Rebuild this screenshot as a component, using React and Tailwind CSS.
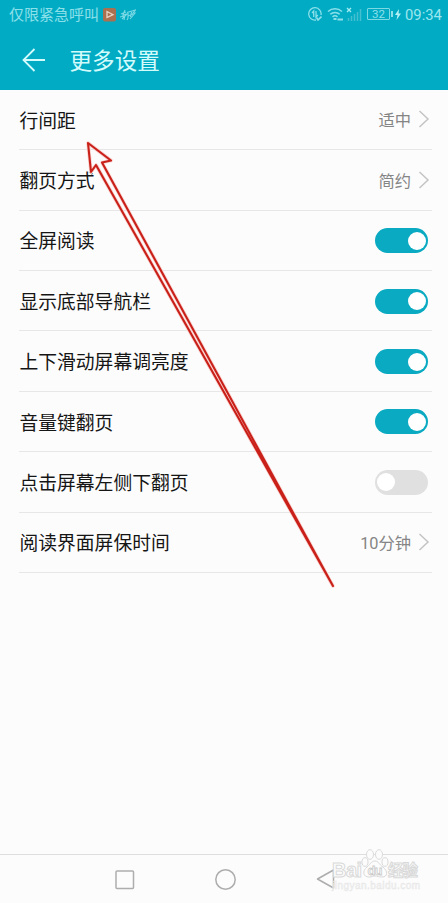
const rows = [
  { label: '行间距', value: '适中' },
  { label: '翻页方式', value: '简约' },
  { label: '全屏阅读', on: true },
  { label: '显示底部导航栏', on: true },
  { label: '上下滑动屏幕调亮度', on: true },
  { label: '音量键翻页', on: true },
  { label: '点击屏幕左侧下翻页', on: false },
  { label: '阅读界面屏保时间', value: '10分钟' },
];

function Toggle({ on }) {
  return (
    <span
      role="switch"
      aria-checked={on}
      className={`mr-[4px] mt-[1px] flex h-[25px] w-[53px] items-center rounded-full px-[2px] ${on ? 'justify-end bg-[#0aaac2]' : 'justify-start bg-[#e0e0e0]'}`}
    >
      <span className="size-[18px] rounded-full bg-white" />
    </span>
  );
}

function Row({ label, value, on }) {
  return (
    <li className="flex h-[60.4px] items-center justify-between border-b border-[#e7e7e7] text-[18.8px] leading-none text-[#151515]">
      <span className="whitespace-nowrap pl-[0.5px] pt-[5px]">{label}</span>
      {value ? (
        <span className="mr-[2px] flex items-center gap-[7px] text-[16.3px] text-[#858585]">
          <span className="pt-[4px]">{value}</span>
          <svg className="h-[18px] w-[12px]" viewBox="0 0 12 18" fill="none" stroke="#c4c4c4" strokeWidth="1.5">
            <path d="M1.500 1 10 9l-8.500 8" />
          </svg>
        </span>
      ) : (
        <Toggle on={on} />
      )}
    </li>
  );
}

function StatusBar() {
  return (
    <div className="flex h-[29px] items-center pl-[9px] pr-[6px] text-[15px] leading-none text-[#8ce0ea]">
      <span className="whitespace-nowrap pt-[2px]">仅限紧急呼叫</span>
      <svg className="ml-[4px] h-[14px] w-[13px]" viewBox="0 0 13 14">
        <rect width="13" height="13.500" rx="2" fill="#aa704f" />
        <path d="M4 3.500v6l6-2.800z" fill="none" stroke="#e9d5c4" strokeWidth="1.300" />
      </svg>
      <svg className="ml-[4px] h-[12px] w-[16px]" viewBox="0 0 16 12" fill="none" stroke="#7ad9e4" strokeWidth="1.100">
        <path d="M1 5 6 3M5 1 3 6l4-1-5 5M5 6l-1 5M0 8l4-1M7 3.500 15.500 1 13 4l2 0-5 6M8 7l5-2M8 4l0 5-1 2M11.500 3l-1 5" />
      </svg>
      <div className="ml-auto flex items-center">
        <svg className="h-[14px] w-[14px]" viewBox="0 0 14 14" fill="none" stroke="#8ce0ea" strokeWidth="1.300">
          <path d="M8 13a6.200 6.200 0 1 1 5-5M5.700 10V4L4 6M8 4v6l1.800-2" />
          <path d="m8.500 10.500 1.500 2.500L13.500 9.500" strokeWidth="1.600" />
        </svg>
        <svg className="ml-[5px] h-[14px] w-[17px]" viewBox="0 0 17 14" fill="none" stroke="#8ce0ea" strokeWidth="1.500">
          <path d="M1 4.500a10.500 10.500 0 0 1 14 0M3.300 7.200a7 7 0 0 1 9.400 0M5.500 9.800a4 4 0 0 1 5 0" />
          <path d="M6.500 12h3M10.500 12.500h5.500" strokeWidth="2" />
        </svg>
        <svg className="ml-[2px] h-[15px] w-[16px]" viewBox="0 0 16 15" fill="none">
          <path d="m1 1 4 4m0-4L1 5" stroke="#a4edf2" strokeWidth="1.300" />
          <path d="M2.500 14v-3M5.500 14V9M8.500 14V7M11.500 14V5M14.500 14V2" stroke="#43bfd0" strokeWidth="1.500" />
        </svg>
        <div className="ml-[5px] flex h-[12px] w-[23px] items-center justify-center rounded-[1px] border border-[#7bd9e4] text-[11.500px]">32</div>
        <div className="ml-[1px] h-[6px] w-[2px] bg-[#8ce0ea]" />
        <svg className="ml-[2px] h-[11px] w-[6px]" viewBox="0 0 6 11" fill="#b5f2f5">
          <path d="M4 0 0 6h2.500L1.500 11 6 4.500H3.500z" />
        </svg>
        <span className="ml-[4px] w-[37px] whitespace-nowrap pt-[1px] text-[14.8px] text-[#9ce7ee]">09:34</span>
      </div>
    </div>
  );
}

function Watermark() {
  return (
    <svg className="absolute left-[328px] top-[848px] h-[46px] w-[98px] opacity-95" viewBox="0 0 98 46" fontFamily="'Liberation Sans', 'Noto Sans CJK SC', sans-serif">
      <g fill="#fdfdfd" stroke="#d8d8d8" strokeWidth="1">
        <ellipse cx="42" cy="6.500" rx="3.500" ry="4.800" />
        <ellipse cx="51" cy="6.500" rx="3.500" ry="4.800" />
        <ellipse cx="37" cy="14" rx="3" ry="4.300" />
        <ellipse cx="57" cy="14" rx="3" ry="4.300" />
        <path d="M47 13c-4 0-5 4-8 6-5 4-4 10 2 10 3 0 4-1 6-1s4 1 7 1c6 0 6-6 1-10-4-2-4-6-8-6z" />
        <text x="4" y="29" fontSize="20" fontWeight="700" textLength="30">Bai</text>
        <text x="39.500" y="27" fontSize="13" fontWeight="700" textLength="15" fill="#fdfdfd" stroke="#c9c9c9" strokeWidth="0.800">du</text>
        <text x="60" y="27.500" fontSize="15.500" fontWeight="700" textLength="30">经验</text>
      </g>
      <text x="4" y="41" fontSize="10" textLength="88" fill="#f3f3f3" stroke="#e6e6e6" strokeWidth="0.400">jingyan.baidu.com</text>
    </svg>
  );
}

export default function App() {
  return (
    <div className="relative flex h-[903px] w-[448px] flex-col overflow-hidden bg-[#fcfcfc] font-[Roboto,'Noto_Sans_CJK_SC',sans-serif]">
      <header className="h-[89.500px] shrink-0 bg-[#02abc4]">
        <StatusBar />
        <div className="flex h-[61px] items-center pl-[22px] text-[22.600px] leading-none text-[#d4fbfc]">
          <svg className="h-[24px] w-[24px]" viewBox="0 0 24 24" fill="none" stroke="#d4fbfc" strokeWidth="1.800">
            <path d="M12.500 1 1.500 12l11 11M1.500 12H23" />
          </svg>
          <h1 className="ml-[23.500px] pt-[5px]">更多设置</h1>
        </div>
      </header>
      <ul className="flex-1 pl-[19px] pr-[16px] pt-[0.300px]">
        {rows.map((row) => (
          <Row key={row.label} {...row} />
        ))}
      </ul>
      <nav className="flex h-[49px] shrink-0 items-center border-t-[1.500px] border-[#dedede]">
        <svg className="ml-[114px] size-[21px]" viewBox="0 0 21 21" fill="none" stroke="#adadad" strokeWidth="1.500">
          <rect x="2" y="2" width="17.500" height="17.500" rx="1" />
        </svg>
        <svg className="ml-[79px] size-[23px]" viewBox="0 0 23 23" fill="none" stroke="#adadad" strokeWidth="1.500">
          <circle cx="11.500" cy="11.500" r="9.700" />
        </svg>
        <svg className="ml-[79px] h-[22px] w-[19px]" viewBox="0 0 19 22" fill="none" stroke="#adadad" strokeWidth="1.500" strokeLinejoin="round">
          <path d="M17.500 2v18L1.500 11z" />
        </svg>
      </nav>
      <Watermark />
      <svg className="absolute left-0 top-0 h-[903px] w-[448px]" viewBox="0 0 448 903" fill="none">
        <path d="M88 143 111 160.500 102 162.500 333 586 96 165 91 172z" stroke="#f9d2cf" strokeWidth="3.600" strokeLinejoin="round" />
        <path d="M88 143 111 160.500 102 162.500 333 586 96 165 91 172z" stroke="#c9211a" strokeWidth="2.100" strokeLinejoin="round" />
      </svg>
    </div>
  );
}
